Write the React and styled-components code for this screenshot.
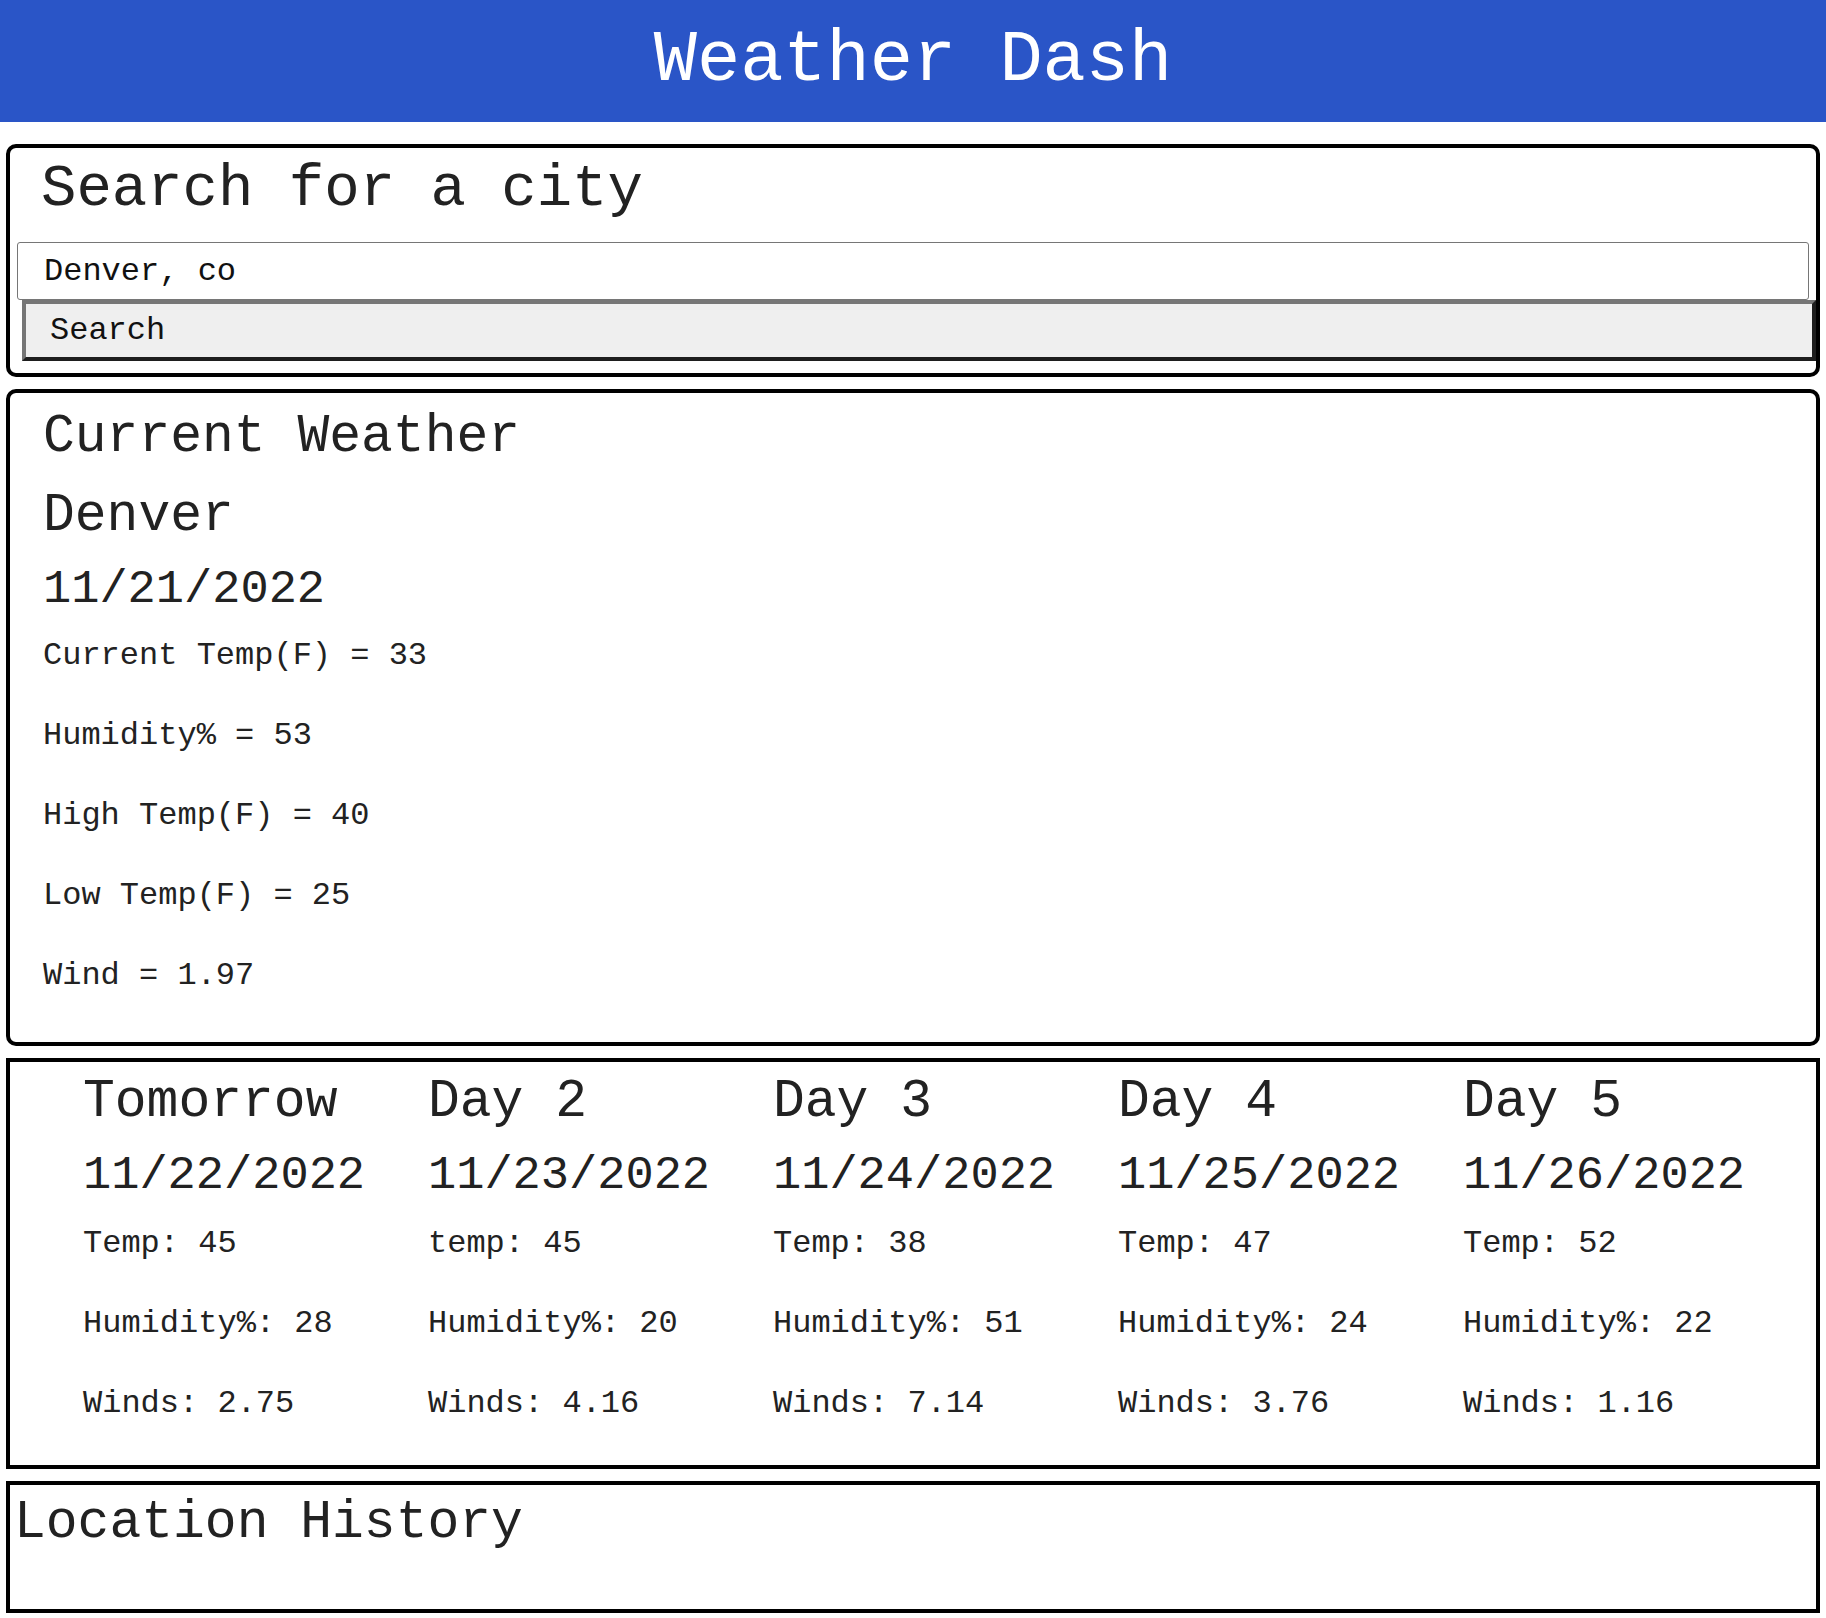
import React from "react";
import styled, { createGlobalStyle } from "styled-components";

const FONT = `"Courier New", "Liberation Mono", monospace`;

const GlobalStyle = createGlobalStyle`
  html, body {
    margin: 0;
    padding: 0;
    background: #ffffff;
  }
  body {
    font-family: ${FONT};
    color: #222222;
  }
  * { box-sizing: border-box; }
`;

const Header = styled.header`
  height: 122px;
  background: #2a55c7;
  display: flex;
  align-items: center;
  justify-content: center;
`;

const HeaderTitle = styled.h1`
  margin: 0;
  font-size: 72px;
  font-weight: 400;
  line-height: 82px;
  color: #ffffff;
`;

const Main = styled.main`
  padding: 22px 6px 0;
  display: flex;
  flex-direction: column;
  gap: 12px;
`;

const Card = styled.section`
  border: 4px solid #000000;
  border-radius: ${(p) => (p.$rounded ? "10px" : "0")};
  padding: ${(p) => p.$pad || "0"};
`;

const SearchTitle = styled.h2`
  margin: 8px 0 19px 31px;
  font-size: 59px;
  font-weight: 400;
  line-height: 67px;
`;

const SearchInput = styled.input`
  display: block;
  width: calc(100% - 14px);
  height: 58px;
  margin: 0 7px;
  padding: 0 26px;
  border: 1px solid #767676;
  border-radius: 3px;
  font-family: ${FONT};
  font-size: 32px;
  color: #111111;
  background: #ffffff;
  outline: none;
`;

const SearchButton = styled.button`
  display: block;
  width: calc(100% - 12px);
  height: 61px;
  margin: 0 0 12px 12px;
  padding: 0 24px;
  text-align: left;
  border-style: solid;
  border-width: 4px;
  border-color: #767676 #1e1e1e #1e1e1e #767676;
  background: #efefef;
  font-family: ${FONT};
  font-size: 32px;
  color: #111111;
`;

const Heading = styled.h2`
  margin: ${(p) => p.$margin || "0"};
  font-size: 53px;
  font-weight: 400;
  line-height: 60px;
  white-space: nowrap;
`;

const DateLine = styled.h3`
  margin: ${(p) => p.$margin || "0"};
  font-size: 47px;
  font-weight: 400;
  line-height: 53px;
  white-space: nowrap;
`;

const Stat = styled.p`
  margin: 0;
  font-size: 32px;
  line-height: 36px;
  white-space: nowrap;
  & + & {
    margin-top: 44px;
  }
`;

const StatList = styled.div`
  margin-top: ${(p) => p.$top}px;
`;

const CurrentBody = styled.div`
  padding: 0 0 47.5px 33px;
`;

const ForecastGrid = styled.div`
  display: grid;
  grid-template-columns: repeat(5, 282px);
  column-gap: 63px;
  padding: 0 0 43px 73px;
`;

const DayColumn = styled.div`
  display: flex;
  flex-direction: column;
`;

const forecast = [
  { title: "Tomorrow", date: "11/22/2022", temp: "Temp: 45", hum: "Humidity%: 28", wind: "Winds: 2.75" },
  { title: "Day 2", date: "11/23/2022", temp: "temp: 45", hum: "Humidity%: 20", wind: "Winds: 4.16" },
  { title: "Day 3", date: "11/24/2022", temp: "Temp: 38", hum: "Humidity%: 51", wind: "Winds: 7.14" },
  { title: "Day 4", date: "11/25/2022", temp: "Temp: 47", hum: "Humidity%: 24", wind: "Winds: 3.76" },
  { title: "Day 5", date: "11/26/2022", temp: "Temp: 52", hum: "Humidity%: 22", wind: "Winds: 1.16" },
];

export default function App() {
  return (
    <>
      <GlobalStyle />
      <Header>
        <HeaderTitle>Weather Dash</HeaderTitle>
      </Header>
      <Main>
        <Card $rounded>
          <SearchTitle>Search for a city</SearchTitle>
          <SearchInput type="text" defaultValue="Denver, co" />
          <SearchButton type="button">Search</SearchButton>
        </Card>

        <Card $rounded>
          <CurrentBody>
            <Heading $margin="14px 0 0">Current Weather</Heading>
            <Heading $margin="19px 0 0">Denver</Heading>
            <DateLine $margin="17px 0 0">11/21/2022</DateLine>
            <StatList $top={22}>
              <Stat>Current Temp(F) = 33</Stat>
              <Stat>Humidity% = 53</Stat>
              <Stat>High Temp(F) = 40</Stat>
              <Stat>Low Temp(F) = 25</Stat>
              <Stat>Wind = 1.97</Stat>
            </StatList>
          </CurrentBody>
        </Card>

        <Card>
          <ForecastGrid>
            {forecast.map((d) => (
              <DayColumn key={d.date}>
                <Heading $margin="10px 0 0">{d.title}</Heading>
                <DateLine $margin="17px 0 0">{d.date}</DateLine>
                <StatList $top={24.5}>
                  <Stat>{d.temp}</Stat>
                  <Stat>{d.hum}</Stat>
                  <Stat>{d.wind}</Stat>
                </StatList>
              </DayColumn>
            ))}
          </ForecastGrid>
        </Card>

        <Card $pad="0 0 56px 4px">
          <Heading $margin="8px 0 0">Location History</Heading>
        </Card>
      </Main>
    </>
  );
}
